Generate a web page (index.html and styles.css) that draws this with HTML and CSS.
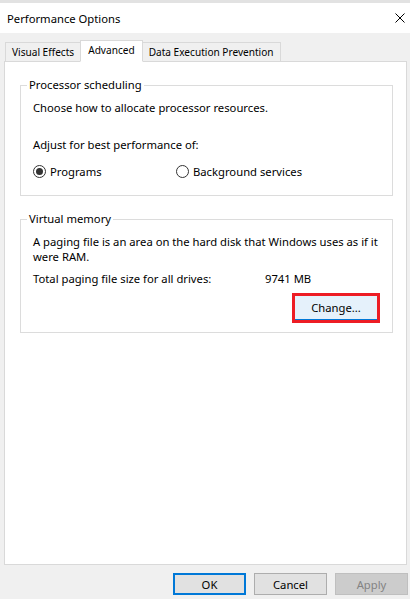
FILE: index.html
```html
<!DOCTYPE html>
<html>
<head>
  <meta charset="UTF-8">
  <title>Performance Options</title>
  <link rel="stylesheet" href="styles.css">
</head>
<body>
  <div class="window">
    <div class="title-bar">
      <span class="title">Performance Options</span>
      <svg class="close" width="10" height="10" viewBox="0 0 10 10">
        <path d="M0.5 0.5 L9.5 9.5 M9.5 0.5 L0.5 9.5" stroke="#000" stroke-width="1" fill="none"/>
      </svg>
    </div>

    <div class="tabs">
      <div class="tab">Visual Effects</div>
      <div class="tab active">Advanced</div>
      <div class="tab">Data Execution Prevention</div>
    </div>

    <div class="panel">
      <fieldset class="group">
        <legend>Processor scheduling</legend>
        <p class="line first">Choose how to allocate processor resources.</p>
        <p class="line adjust">Adjust for best performance of:</p>
        <div class="radios">
          <label class="radio-item programs"><span class="radio checked"></span>Programs</label>
          <label class="radio-item"><span class="radio"></span>Background services</label>
        </div>
      </fieldset>

      <fieldset class="group memory">
        <legend>Virtual memory</legend>
        <p class="line first">A paging file is an area on the hard disk that Windows uses as if it were RAM.</p>
        <div class="total">
          <span class="total-label">Total paging file size for all drives:</span>
          <span>9741 MB</span>
        </div>
        <div class="change-row">
          <span class="highlight"><button type="button" class="btn change">Change...</button></span>
        </div>
      </fieldset>
    </div>

    <div class="footer">
      <button type="button" class="btn default">OK</button>
      <button type="button" class="btn">Cancel</button>
      <button type="button" class="btn disabled">Apply</button>
    </div>
  </div>
</body>
</html>
```

FILE: styles.css
```css
:root {
  --face: #f0f0f0;
  --panel-border: #d9d9d9;
  --group-border: #dcdcdc;
  --accent: #0078d7;
  --text: #000;
}

body {
  margin: 0;
  background: var(--face);
  font-family: 'Noto Sans', 'Segoe UI', Arial, sans-serif;
  font-size: 11.25px;
  color: var(--text);
}

.window {
  width: 410px;
  height: 599px;
  display: flex;
  flex-direction: column;
  box-sizing: border-box;
}

.title-bar {
  height: 30px;
  border-top: 3px solid #e2e2e2;
  background: white;
  display: flex;
  align-items: center;
  justify-content: space-between;
  padding: 0 5px 0 7px;
}

.close {
  display: block;
}

.tabs {
  display: flex;
  align-items: flex-end;
  margin-top: 7px;
  padding-left: 5px;
  margin-bottom: -1px;
  position: relative;
  z-index: 1;
  font-size: 10.1px;
}

.tab {
  height: 18px;
  line-height: 19px;
  padding: 0 6px;
  border: 1px solid var(--panel-border);
  border-bottom: none;
  background: var(--face);
  margin-bottom: 1px;
}

.tab + .tab {
  margin-left: -1px;
}

.tab.active {
  height: 20px;
  line-height: 18px;
  background: white;
  margin-bottom: 0;
  padding: 0 7px;
  border-bottom: 1px solid white;
}

.panel {
  flex: 1;
  margin: 0 3px 0 4px;
  background: white;
  border: 1px solid var(--panel-border);
  padding: 15px 13px 0 15px;
}

.group {
  margin: 0;
  border: 1px solid var(--group-border);
  padding: 0 12px 16px 12px;
  min-width: 0;
}

.group legend {
  line-height: 16px;
  padding: 0 2px;
  margin-left: -6px;
}

.line {
  margin: 0;
  line-height: 15px;
}

.line.first {
  margin-top: 7px;
}

.line.adjust {
  margin-top: 22px;
}

.radios {
  display: flex;
  margin-top: 12px;
  line-height: 15px;
}

.radio-item {
  display: flex;
  align-items: center;
}

.radio-item.programs {
  width: 143px;
}

.radio {
  width: 11px;
  height: 11px;
  border: 1px solid #333;
  border-radius: 50%;
  margin-right: 4px;
  display: flex;
  align-items: center;
  justify-content: center;
}

.radio.checked::after {
  content: "";
  width: 7px;
  height: 7px;
  border-radius: 50%;
  background: #333;
}

.group.memory {
  margin-top: 15px;
  padding-bottom: 9px;
}

.total {
  display: flex;
  margin-top: 7px;
  line-height: 15px;
}

.total-label {
  width: 232px;
}

.change-row {
  display: flex;
  justify-content: flex-end;
  margin-top: 7px;
}

.highlight {
  border: 3px solid #ed1c24;
  display: flex;
}

.btn {
  font: inherit;
  color: var(--text);
  background: #e1e1e1;
  border: 1px solid #adadad;
  width: 73px;
  height: 22px;
  padding: 0;
}

.btn.change {
  width: 82px;
  height: 24px;
  background: #e5f1fb;
  border: none;
  border-bottom: 1px solid var(--accent);
}

.footer {
  display: flex;
  justify-content: flex-end;
  gap: 8px;
  padding: 8px 2px 4px;
}

.btn.default {
  border: 2px solid var(--accent);
}

.btn.disabled {
  background: #cccccc;
  border-color: #bfbfbf;
  color: #838383;
}
```
